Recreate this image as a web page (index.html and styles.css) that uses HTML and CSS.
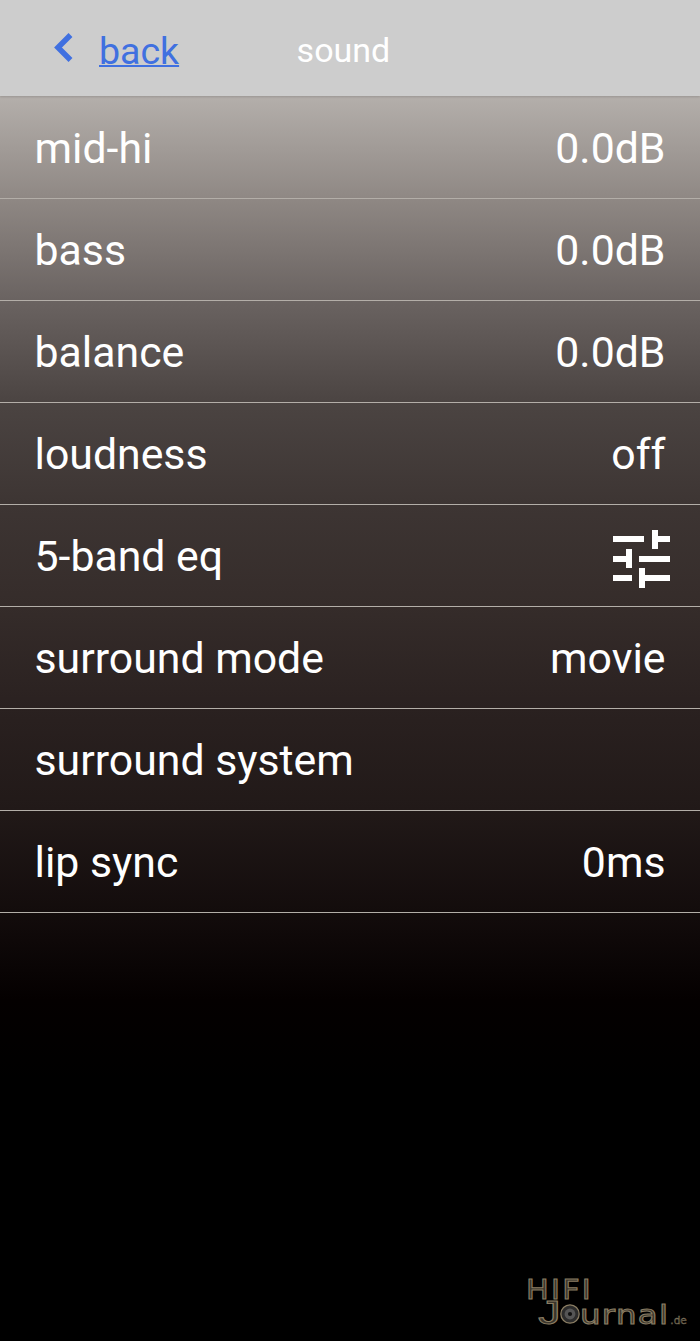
FILE: index.html
```html
<!DOCTYPE html>
<html lang="en">

<head>
    <meta charset="UTF-8">
    <meta name="viewport" content="width=device-width, initial-scale=1.0">
    <title>sound</title>
    <link rel="stylesheet" href="styles.css">
</head>

<body>
    <header class="topbar">
        <a class="back" href="#">
            <svg class="back-icon" viewBox="0 0 20 30" width="20" height="30">
                <path d="M17.5 2 L5 14.5 L17.5 27" fill="none" stroke="#4070e0" stroke-width="5.5" />
            </svg>
            <span class="back-text">back</span>
        </a>
        <span class="topbar-title">sound</span>
    </header>

    <main class="list">
        <div class="row"><span>mid-hi</span><span>0.0dB</span></div>
        <div class="row"><span>bass</span><span>0.0dB</span></div>
        <div class="row"><span>balance</span><span>0.0dB</span></div>
        <div class="row"><span>loudness</span><span>off</span></div>
        <div class="row">
            <span>5-band eq</span>
            <svg class="eq-icon" viewBox="0 0 60 60" width="60" height="60">
                <g fill="#fff">
                    <rect x="2" y="7" width="31" height="6" />
                    <rect x="41" y="1" width="6" height="19" />
                    <rect x="47" y="7" width="12" height="6" />
                    <rect x="2" y="27" width="13" height="6" />
                    <rect x="15" y="20" width="6" height="19" />
                    <rect x="28" y="27" width="31" height="6" />
                    <rect x="2" y="46" width="19" height="6" />
                    <rect x="28" y="39" width="6" height="20" />
                    <rect x="34" y="46" width="25" height="6" />
                </g>
            </svg>
        </div>
        <div class="row"><span>surround mode</span><span>movie</span></div>
        <div class="row"><span>surround system</span></div>
        <div class="row"><span>lip sync</span><span>0ms</span></div>
    </main>

    <div class="logo">
        <div class="logo-top">HIFI</div>
        <div class="logo-bottom">
            <span class="logo-j">J</span>
            <svg class="logo-speaker" viewBox="0 0 24 24" width="20" height="20">
                <circle cx="12" cy="12" r="11" fill="#2c2c2c" stroke="#8a7d63" stroke-width="1.5" />
                <circle cx="12" cy="12" r="6.5" fill="#555" />
                <circle cx="12" cy="12" r="2.5" fill="#111" />
            </svg>
            <span class="logo-rest">urnal</span><span class="logo-de">.de</span>
        </div>
    </div>
</body>

</html>
```

FILE: styles.css
```css
html,
body {
    margin: 0;
    padding: 0;
}

body {
    position: relative;
    height: 1341px;
    overflow: hidden;
    font-family: Roboto, sans-serif;
    color: #fff;
    background: linear-gradient(to bottom,
            #b4afab 96px,
            #8f8884 198px,
            #6a6361 300px,
            #4b4442 402px,
            #3d3533 504px,
            #352c2a 606px,
            #2a2120 708px,
            #211918 810px,
            #130c0c 912px,
            #040000 1000px,
            #000 1080px);
}

.topbar {
    display: flex;
    align-items: center;
    height: 96px;
    padding-left: 53px;
    box-sizing: border-box;
    background: #cdcdcd;
    box-shadow: 0 1px 2px rgba(0, 0, 0, 0.15);
}

.back {
    display: flex;
    align-items: center;
    gap: 26px;
    color: #4070e0;
    text-decoration: none;
}

.back-text {
    margin-top: 5px;
    font-size: 37.5px;
    text-decoration: underline;
    text-decoration-thickness: 2px;
}

.topbar-title {
    margin: 3px 0 0 117.5px;
    font-size: 34px;
}

.list {
    padding-top: 1px;
}

.row {
    display: flex;
    justify-content: space-between;
    align-items: center;
    height: 102px;
    padding: 1px 34.5px 0;
    box-sizing: border-box;
    border-bottom: 1px solid #b3aea8;
    font-size: 42.8px;
}

.eq-icon {
    margin: 5px -5.5px 0 0;
}

.logo {
    position: absolute;
    right: 12px;
    bottom: 15px;
    width: 162px;
    color: #3a352b;
    -webkit-text-stroke: 1px #8a7d63;
    font-family: "DejaVu Sans", sans-serif;
}

.logo-top {
    height: 20px;
    line-height: 20px;
    font-size: 27px;
    letter-spacing: 2px;
    transform: scaleX(1.12);
    transform-origin: left;
}

.logo-bottom {
    display: flex;
    align-items: baseline;
    height: 26px;
    line-height: 26px;
    padding-left: 17.5px;
}

.logo-j {
    font-family: "Liberation Sans", sans-serif;
    font-size: 33px;
    transform: scaleX(1.35);
    transform-origin: right;
}

.logo-speaker {
    flex: none;
}

.logo-rest {
    margin-right: 19px;
    font-size: 26px;
    letter-spacing: 1px;
    transform: scaleX(1.25);
    transform-origin: left;
}

.logo-de {
    font-size: 10.5px;
    -webkit-text-stroke: 0.4px #8a7d63;
}
```
